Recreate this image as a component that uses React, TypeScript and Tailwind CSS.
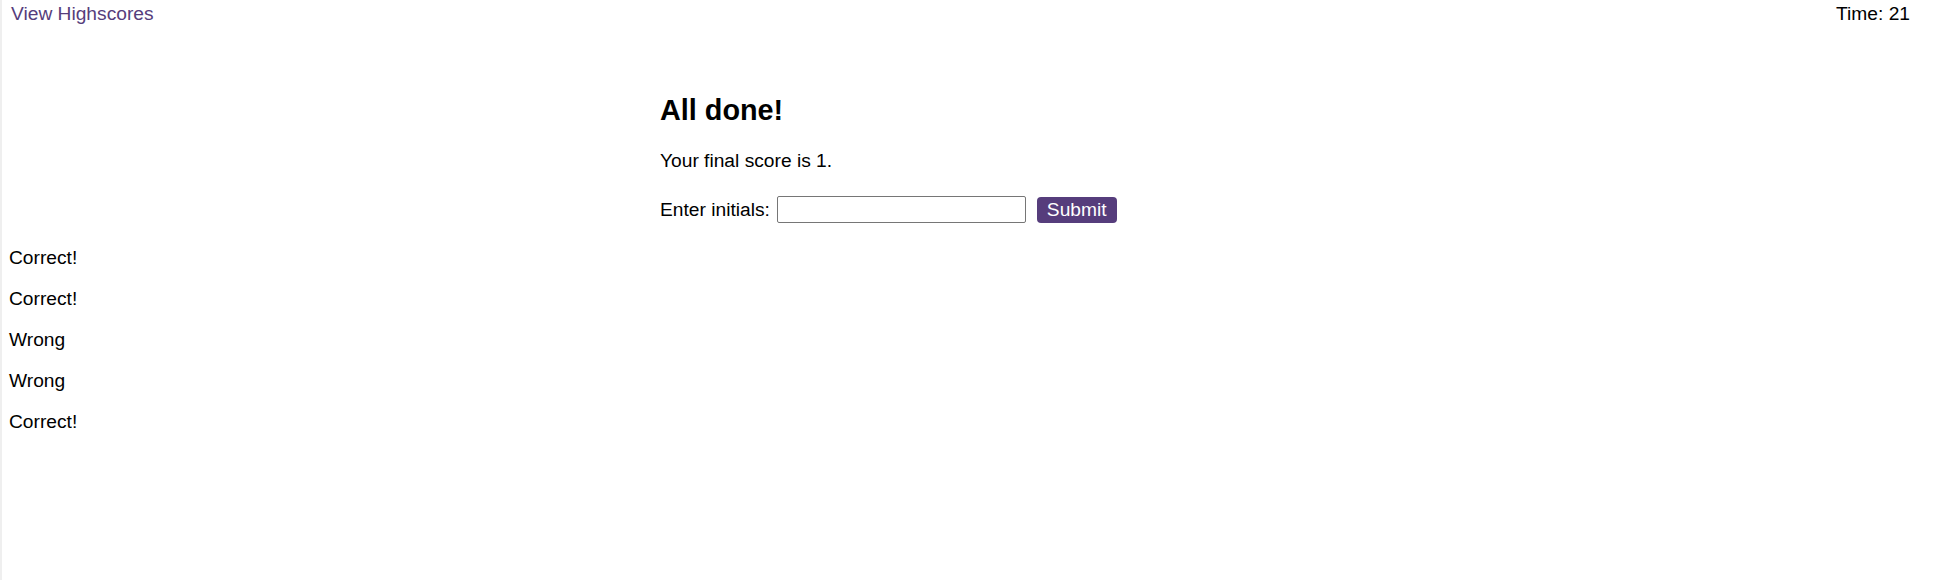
import React from "react";

export default function App() {
  const feedback = ["Correct!", "Correct!", "Wrong", "Wrong", "Correct!"];
  return (
    <div className="min-h-[580px] border-l-2 border-[#efefef] bg-white text-black font-['Liberation_Sans',Arial,sans-serif] text-[19.2px] leading-[22px]">
      <header className="flex justify-between pl-[9px] pr-[40px] pt-[3px]">
        <a className="text-[#563d7c] cursor-pointer">View Highscores</a>
        <span>Time: 21</span>
      </header>
      <main className="pl-[658px] pt-[69px]">
        <h2 className="text-[28.8px] leading-[32px] font-bold">All done!</h2>
        <p className="mt-[24px]">Your final score is 1.</p>
        <div className="mt-[24px] flex items-center h-[27px]">
          <label>Enter initials:</label>
          <input
            type="text"
            className="ml-[7px] w-[249px] h-[27px] border border-[#767676] rounded-[2px] bg-white px-1 outline-none"
          />
          <button className="ml-[11px] h-[26px] px-[10px] rounded-[4px] bg-[#563d7c] text-white leading-[22px]">
            Submit
          </button>
        </div>
      </main>
      <section className="pl-[7px] mt-[24px] flex flex-col gap-[19px]">
        {feedback.map((f, i) => (
          <p key={i}>{f}</p>
        ))}
      </section>
    </div>
  );
}
